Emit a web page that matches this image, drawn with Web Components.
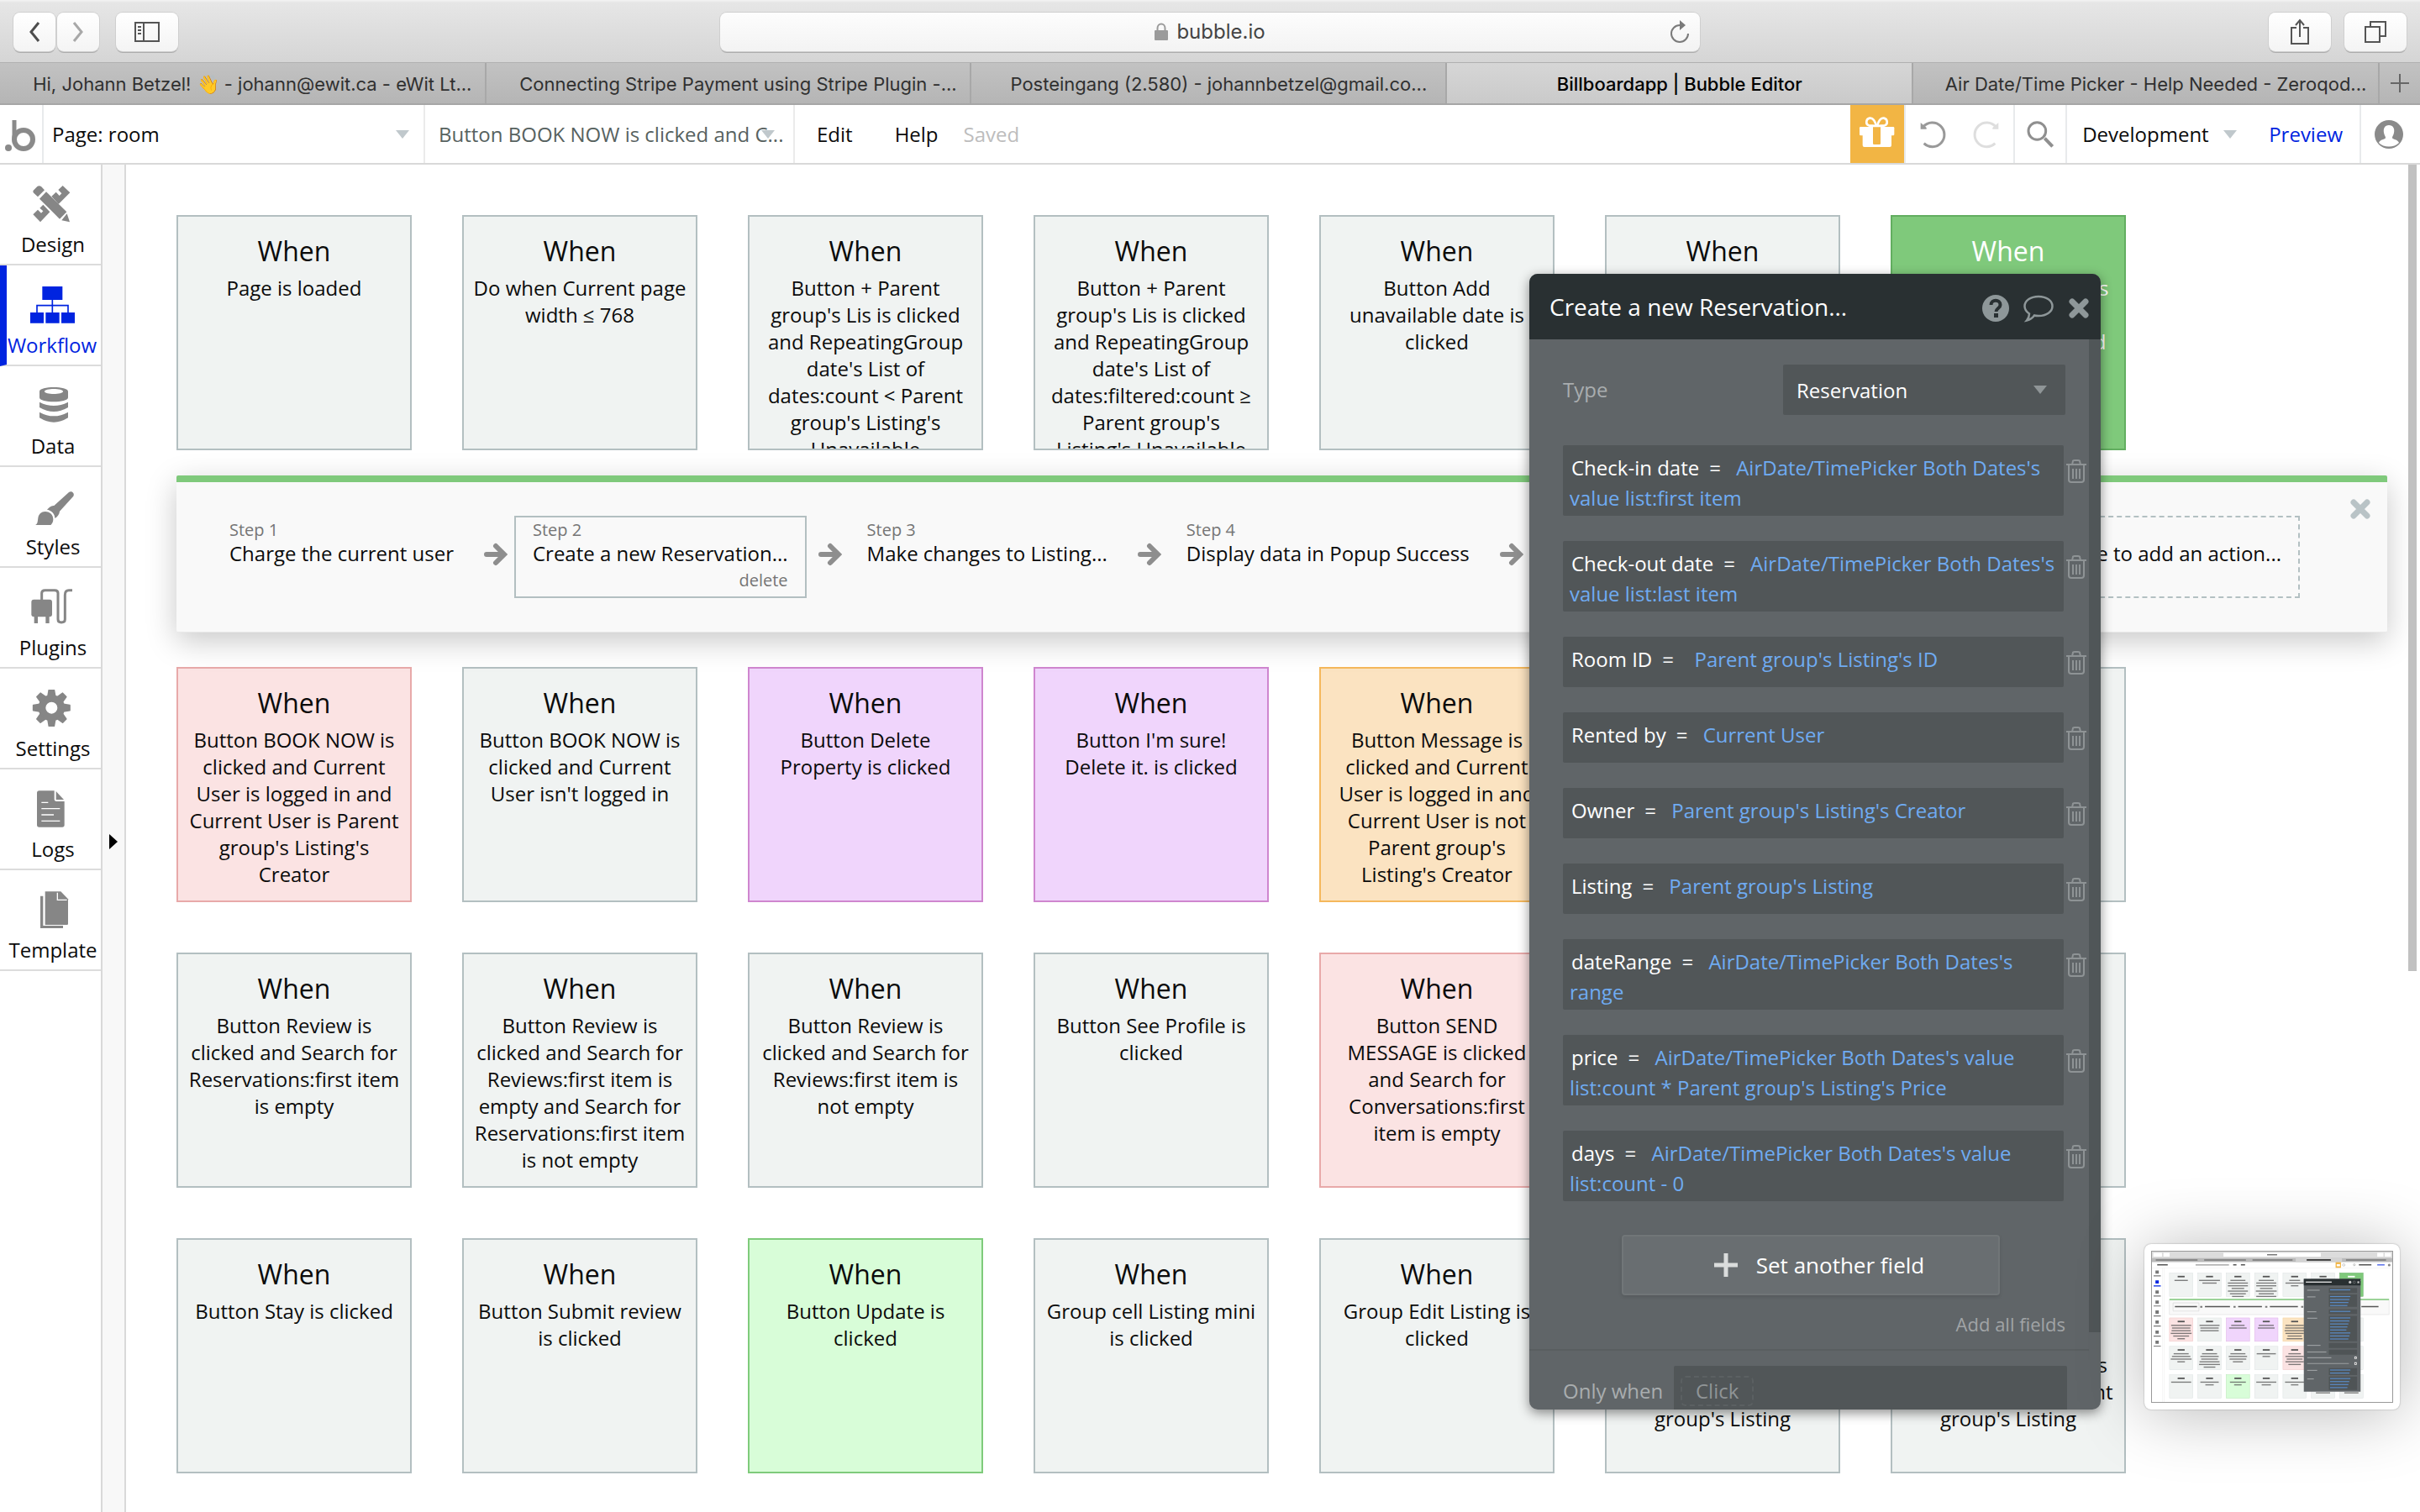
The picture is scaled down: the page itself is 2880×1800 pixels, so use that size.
<!DOCTYPE html>
<html lang="en">
<head>
<meta charset="utf-8">
<title>Billboardapp | Bubble Editor</title>
<style>
  html, body { margin: 0; height: 100%; }
  body { font-family: "Open Sans", "Noto Sans", sans-serif; font-size: 24px; line-height: 32px; color: #0b0b0b; background: #fff; overflow: hidden; }
</style>
</head>
<body>
<app-shell>
  <browser-bar slot="browser" url="bubble.io">
    <browser-tab style="flex-grow:579">Hi, Johann Betzel! 👋 - johann@ewit.ca - eWit Lt...</browser-tab>
    <browser-tab style="flex-grow:578">Connecting Stripe Payment using Stripe Plugin -...</browser-tab>
    <browser-tab style="flex-grow:566">Posteingang (2.580) - johannbetzel@gmail.co...</browser-tab>
    <browser-tab style="flex-grow:554" active>Billboardapp | Bubble Editor</browser-tab>
    <browser-tab style="flex-grow:554">Air Date/Time Picker - Help Needed - Zeroqod...</browser-tab>
  </browser-bar>
  <editor-header slot="header"></editor-header>
  <side-nav slot="nav">
    <nav-item icon="design">Design</nav-item>
    <nav-item icon="workflow" active>Workflow</nav-item>
    <nav-item icon="data">Data</nav-item>
    <nav-item icon="styles">Styles</nav-item>
    <nav-item icon="plugins">Plugins</nav-item>
    <nav-item icon="settings">Settings</nav-item>
    <nav-item icon="logs">Logs</nav-item>
    <nav-item icon="template">Template</nav-item>
  </side-nav>

  <card-grid>
    <when-card>Page is loaded</when-card>
    <when-card>Do when Current page width ≤ 768</when-card>
    <when-card>Button + Parent group's Lis is clicked and RepeatingGroup date's List of dates:count &lt; Parent group's Listing's Unavailable</when-card>
    <when-card>Button + Parent group's Lis is clicked and RepeatingGroup date's List of dates:filtered:count ≥ Parent group's Listing's Unavailable</when-card>
    <when-card>Button Add unavailable date is clicked</when-card>
    <when-card></when-card>
    <when-card tone="selected">Button BOOK NOW is clicked and Current User is logged in and</when-card>
  </card-grid>

  <steps-panel>
    <step-box label="Step 1">Charge the current user</step-box>
    <step-box label="Step 2" active>Create a new Reservation...</step-box>
    <step-box label="Step 3">Make changes to Listing...</step-box>
    <step-box label="Step 4">Display data in Popup Success</step-box>
    <step-box placeholder slot="end">Click here to add an action...</step-box>
  </steps-panel>

  <card-grid>
    <when-card tone="red">Button BOOK NOW is clicked and Current User is logged in and Current User is Parent group's Listing's Creator</when-card>
    <when-card>Button BOOK NOW is clicked and Current User isn't logged in</when-card>
    <when-card tone="purple">Button Delete Property is clicked</when-card>
    <when-card tone="purple">Button I'm sure! Delete it. is clicked</when-card>
    <when-card tone="orange">Button Message is clicked and Current User is logged in and Current User is not Parent group's Listing's Creator</when-card>
    <when-card></when-card>
    <when-card></when-card>

    <when-card>Button Review is clicked and Search for Reservations:first item is empty</when-card>
    <when-card>Button Review is clicked and Search for Reviews:first item is empty and Search for Reservations:first item is not empty</when-card>
    <when-card>Button Review is clicked and Search for Reviews:first item is not empty</when-card>
    <when-card>Button See Profile is clicked</when-card>
    <when-card tone="red">Button SEND MESSAGE is clicked and Search for Conversations:first item is empty</when-card>
    <when-card></when-card>
    <when-card></when-card>

    <when-card>Button Stay is clicked</when-card>
    <when-card>Button Submit review is clicked</when-card>
    <when-card tone="green">Button Update is clicked</when-card>
    <when-card>Group cell Listing mini is clicked</when-card>
    <when-card>Group Edit Listing is clicked</when-card>
    <when-card>Button Next<br>is clicked<br>when Current User is<br>Current User is Parent group's Listing</when-card>
    <when-card>Button Save<br>is clicked<br>when Current User is<br>Current User is Parent group's Listing</when-card>
  </card-grid>

  <property-dialog slot="dialog" heading="Create a new Reservation...">
    <field-row name="Check-in date">AirDate/TimePicker Both Dates's value list:first item</field-row>
    <field-row name="Check-out date">AirDate/TimePicker Both Dates's value list:last item</field-row>
    <field-row name="Room ID">&nbsp;Parent group's Listing's ID</field-row>
    <field-row name="Rented by">Current User</field-row>
    <field-row name="Owner">Parent group's Listing's Creator</field-row>
    <field-row name="Listing">Parent group's Listing</field-row>
    <field-row name="dateRange">AirDate/TimePicker Both Dates's range</field-row>
    <field-row name="price">AirDate/TimePicker Both Dates's value list:count * Parent group's Listing's Price</field-row>
    <field-row name="days">AirDate/TimePicker Both Dates's value list:count - 0</field-row>
  </property-dialog>
  <screen-thumbnail slot="thumbnail"></screen-thumbnail>
</app-shell>

<script>
const gearTeeth = [0, 45, 90, 135, 180, 225, 270, 315]
  .map(a => `<path d="M171 1886l4-23h18l4 23z" transform="rotate(${a} 184 1928)"/>`).join('');

/* name: [viewBox, width, height, markup] */
const ICONS = {
  design: ['99 63 180 132', 60, 44, `<path d="M119 80l14-14q7-5 14 0l12 13-24 24-13-12q-6-5-3-11z"/><path d="M141 110l24-25 73 72-25 25z"/><path d="M220 187l19-24 10 30z"/><path d="M184 101l16-15 12 13 8-8-12-13 16-15 26 25-41 41z"/><path d="M118 166l17-17 12 12 7-7-12-11 12-12 24 26-34 36z"/>`],
  workflow: ['99 423 180 132', 60, 44, `<path d="M154 423h72v48h-72zM111 516h48v38h-48zM166 516h49v38h-49zM222 516h48v38h-48z"/><path d="M190 470v46M135 516v-25h111v25" fill="none" stroke="currentColor" stroke-width="5"/>`],
  data: ['99 783 180 132', 60, 44, `<path fill-rule="evenodd" d="M141 798c0-20 102-20 102 0v22c0 20-102 20-102 0zM159 798c0 12 66 12 66 0s-66-12-66 0z"/><path d="M141 836q51 26 102 0v19q-51 30-102 0z"/><path d="M141 872q51 28 102 0v20q-51 32-102 0z"/>`],
  styles: ['99 1143 180 132', 60, 44, `<path d="M246 1158c9-7 22 3 16 14l-49 54c-1 12-9 20-17 25 0-15-10-27-28-31 8-8 14-15 25-14z"/><path d="M161 1227c19 0 29 13 29 28 0 17-14 29-35 29-12 0-22-3-28-10 8-4 7-12 9-24 2-14 12-23 25-23z"/>`],
  plugins: ['99 1503 180 132', 60, 44, `<rect x="112" y="1541" width="74" height="62" rx="9"/><path d="M122 1600h13v26h-13zM163 1600h13v26h-13z"/><path d="M149 1543v-25q0-10 12-10h34q12 0 12 10v94q0 11 12 11 13 0 13-11v-87q0-17 14-17h12" fill="none" stroke="currentColor" stroke-width="9"/>`],
  settings: ['99 1863 180 132', 60, 44, `<circle cx="184" cy="1928" r="34" fill="none" stroke="currentColor" stroke-width="26"/><g stroke="currentColor" stroke-width="5" stroke-linejoin="round">${gearTeeth}</g>`],
  logs: ['99 2223 180 132', 60, 44, `<path d="M140 2224h54v30q0 8 8 8h28v84q0 8-8 8h-82q-8 0-8-8v-114q0-8 8-8z"/><path d="M200 2226l28 30h-28z"/><path d="M148 2266h24M148 2288h66M148 2310h44M148 2332h66" stroke="#fff" stroke-width="4"/>`],
  template: ['99 2583 180 132', 60, 44, `<path d="M161 2584h56l26 27v88q0 4-4 4h-78z"/><path d="M205 2588v26h34" fill="none" stroke="#fff" stroke-width="4"/><path d="M144 2600h10v106h71v9h-81z"/>`],
  back: ['0 0 14 24', 14, 24, `<path d="M12 1L3 12l9 11" fill="none" stroke="#4d4d4d" stroke-width="3"/>`],
  forward: ['0 0 14 24', 14, 24, `<path d="M2 1l9 11-9 11" fill="none" stroke="#a8a8a8" stroke-width="3"/>`],
  sidebar: ['0 0 30 24', 30, 24, `<path d="M1 1h28v22H1zM11 1v22M4 6h4M4 10h4M4 14h4" fill="none" stroke="#555" stroke-width="2"/>`],
  lock: ['0 0 16 22', 16, 22, `<rect y="9" width="16" height="12" rx="1" fill="#9b9b9b"/><path d="M3.500 10V6.500a4.500 5 0 0 1 9 0V10" fill="none" stroke="#9b9b9b" stroke-width="2"/>`],
  reload: ['0 0 24 28', 24, 28, `<path d="M12 6a10 10 0 1 0 10 10" fill="none" stroke="#7a7a7a" stroke-width="2"/><path d="M12 0l7 6-7 6z" fill="#7a7a7a"/>`],
  share: ['0 0 24 32', 24, 32, `<path d="M8 11H2v19h20V11h-6M12 22V3M7 8l5-6 5 6" fill="none" stroke="#555" stroke-width="2"/>`],
  tabs: ['0 0 26 26', 26, 26, `<path d="M1 7h17v18H1zM7 7V1h18v17h-7" fill="none" stroke="#555" stroke-width="2"/>`],
  plus: ['0 0 24 24', 24, 24, `<path d="M12 1v22M1 12h22" stroke="#666" stroke-width="2"/>`],
  logo: ['0 0 40 44', 40, 44, `<circle cx="5" cy="38" r="4"/><path d="M12 5v23" stroke="currentColor" stroke-width="5"/><circle cx="23" cy="28" r="11" fill="none" stroke="currentColor" stroke-width="6"/>`],
  gift: ['33 378 192 204', 64, 68, `<g fill="#fff"><rect x="66" y="456" width="124" height="31" rx="4"/><path d="M77 486h103v36q0 6-6 6H83q-6 0-6-6z"/></g><g fill="none" stroke="#fff" stroke-width="8"><path d="M127 455c-6-22-16-32-25-30-14 3-15 22-3 26 9 2 19 0 28 4z"/><path d="M128 455c6-22 16-32 25-30 14 3 15 22 3 26-9 2-19 0-28 4z"/></g><path d="M114 457h27v58q0 4-4 4h-19q-4 0-4-4z" fill="#f2b544"/>`],
  undo: ['277 426 96 108', 32, 36, `<path d="M292 452a43 43 0 1 1 2 60" fill="none" stroke="#999" stroke-width="9"/><path d="M282 438l21 18v5h-21z" fill="#999"/>`],
  redo: ['473 426 96 108', 32, 36, `<path d="M554 452a43 43 0 1 0-2 60" fill="none" stroke="#dedede" stroke-width="9"/><path d="M564 438l-21 18v5h21z" fill="#dedede"/>`],
  search: ['664 435 102 102', 34, 34, `<g fill="none" stroke="#8f8f8f"><circle cx="704" cy="474" r="31" stroke-width="9"/><path d="M731 500l28 29" stroke-width="12"/></g>`],
  user: ['0 0 34 34', 34, 34, `<circle cx="17" cy="17" r="17" fill="#8a8a8a"/><path d="M17 6c5 0 7 4 6 9-.5 3-2 4-2 6s7 2 8 6c-6 6-18 6-24 0 1-4 8-4 8-6s-1.500-3-2-6c-1-5 1-9 6-9z" fill="#fff"/>`],
  caret: ['0 0 16 10', 16, 10, `<path d="M0 0h16L8 10z"/>`],
  arrow: ['0 0 28 28', 28, 28, `<path d="M3 14h19M14 4l10 10-10 10" fill="none" stroke="#8e8e8e" stroke-width="6" stroke-linecap="round"/>`],
  close: ['0 0 26 26', 26, 26, `<path d="M5 5l16 16M21 5L5 21" fill="none" stroke="currentColor" stroke-width="7" stroke-linecap="round"/>`],
  help: ['0 0 32 32', 32, 32, `<circle cx="16" cy="16" r="16"/><path d="M10.500 12c0-7 11-7 11 0 0 4-5 4-5 8" fill="none" stroke="#293032" stroke-width="4"/><path d="M14 22h5v5h-5z" fill="#293032"/>`],
  comment: ['0 0 38 34', 38, 34, `<path d="M19 3c9.500 0 16.500 5 16.500 11.500S28.500 26 19 26c-2 0-3.500 0-5-.5-2 3-5 5-9 6 2-2.500 3-5 3-8C4.500 21 2.500 18 2.500 14.500 2.500 8 9.500 3 19 3z" fill="none" stroke="currentColor" stroke-width="2.500"/>`],
  trash: ['0 0 24 30', 24, 30, `<path d="M0 7h24M3 7v18q0 3 3 3h12q3 0 3-3V7M7 7l1-4q0-1 2-1h4q2 0 2 1l1 4M8 12v12M12 12v12M16 12v12" fill="none" stroke="#8e9395" stroke-width="2"/>`],
  bigplus: ['0 0 28 28', 28, 28, `<path d="M14 0v28M0 14h28" stroke="#dadcdc" stroke-width="5"/>`]
};

function define(name, html, setup) {
  const template = document.createElement('template');
  template.innerHTML = html;
  customElements.define(name, class extends HTMLElement {
    connectedCallback() {
      if (this.shadowRoot) return;
      const root = this.attachShadow({ mode: 'open' });
      root.append(template.content.cloneNode(true));
      if (setup) setup(this, root);
    }
  });
}

const RESET = `*{box-sizing:border-box} button,select,input{font:inherit;color:inherit;margin:0;padding:0;border:0;background:none;border-radius:0;appearance:none;outline:0;cursor:pointer}`;

define('ui-icon', `<style>:host{display:inline-flex;flex:none} svg{display:block;fill:currentColor}</style>`, (el, root) => {
  const [box, w, h, body] = ICONS[el.getAttribute('name')];
  root.innerHTML += `<svg viewBox="${box}" width="${w}" height="${h}" aria-hidden="true">${body}</svg>`;
});

define('app-shell', `<style>
  :host{display:flex;flex-direction:column;height:100vh;position:relative}
  .work{flex:1;display:flex;min-height:0}
  main{flex:1;min-width:0;position:relative;overflow:hidden;padding:60px 39px 0 60px;display:flex;flex-direction:column}
  ::slotted(card-grid){flex:none}
  .bar{position:absolute;right:4px;top:0;width:10px;height:960px;background:#c1c1c1}
</style>
<slot name="browser"></slot><slot name="header"></slot>
<div class="work"><slot name="nav"></slot><main><slot></slot><div class="bar"></div></main></div>
<slot name="dialog"></slot><slot name="thumbnail"></slot>`);

define('browser-bar', `<style>${RESET}
  :host{display:block;font-family:Inter,"Liberation Sans",sans-serif;color:#303030}
  .tools{height:75px;display:grid;grid-template-columns:1fr 1166px 1fr;align-items:center;padding:2px 16px 0;background:linear-gradient(#f4f4f4 0,#e6e6e6 3px,#d5d5d5);border-bottom:1px solid #b0b0b0}
  .group{display:flex;gap:2px}
  .group.end{justify-content:flex-end;gap:16px}
  button{height:46px;width:50px;border-radius:8px;background:linear-gradient(#fff,#f4f4f4);box-shadow:0 0 0 1px #cfcfcf,0 2px 0 #acacac;display:flex;align-items:center;justify-content:center}
  button.wide{width:74px}
  .group:first-child .wide{margin-left:18px}
  .url{height:46px;border-radius:8px;background:linear-gradient(#fdfdfd,#f3f3f3);box-shadow:0 0 0 1px #cfcfcf,0 2px 0 #acacac;display:grid;grid-template-columns:36px 1fr 36px;align-items:center}
  label{display:flex;justify-content:center;align-items:center;gap:10px}
  input{field-sizing:content;cursor:text;font-size:24px;height:32px;color:#444}
  .url button{background:none;box-shadow:none;width:24px;height:32px}
  .tabs{height:50px;display:flex;background:linear-gradient(#c2c2c2,#b5b5b5);border-bottom:2px solid #a6a6a6}
  .tabs button{width:48px;height:48px;background:none;box-shadow:none;border-radius:0}
</style>
<div class="tools">
  <div class="group"><button aria-label="Back"><ui-icon name="back"></ui-icon></button><button aria-label="Forward"><ui-icon name="forward"></ui-icon></button><button class="wide" aria-label="Show sidebar"><ui-icon name="sidebar"></ui-icon></button></div>
  <div class="url"><span></span><label><ui-icon name="lock"></ui-icon><input aria-label="Address"></label><button aria-label="Reload"><ui-icon name="reload"></ui-icon></button></div>
  <div class="group end"><button class="wide" aria-label="Share"><ui-icon name="share"></ui-icon></button><button class="wide" aria-label="Tab overview"><ui-icon name="tabs"></ui-icon></button></div>
</div>
<div class="tabs"><slot></slot><button aria-label="New tab"><ui-icon name="plus"></ui-icon></button></div>`,
(el, root) => root.querySelector('input').value = el.getAttribute('url'));

define('browser-tab', `<style>
  :host{flex:1 1 0;min-width:0;display:flex;align-items:center;justify-content:center;padding:2px 0 0 24px;border-right:2px solid #a8a8a8;font-size:22px;white-space:nowrap;box-sizing:border-box}
  :host([active]){background:linear-gradient(#d6d6d6,#cacaca);color:#000;font-weight:500;padding:2px 12px 0}
</style><slot></slot>`);

define('editor-header', `<style>${RESET}
  :host{display:flex;height:71px;box-sizing:border-box;border-bottom:2px solid #d9d9d9;align-items:stretch;background:#fff;flex:none}
  .cell{display:flex;align-items:center;justify-content:center;border-right:2px solid #e8eaec}
  .logo{width:52px;color:#8a8a8a}
  .pick{display:grid;align-items:center;border-right:2px solid #ebebeb}
  .pick>*{grid-area:1/1}
  .pick ui-icon{justify-self:end;color:#c0c8cc;pointer-events:none;margin-right:17px}
  select{width:100%;height:100%;padding-left:10px}
  .page{width:454px}
  .flow{width:440px;color:#57625f} .flow select{padding-left:16px} .flow ui-icon{margin-right:22px}
  .menu{display:flex;align-items:center;flex:1;padding-left:26px}
  .menu button+button{margin-left:50px}
  .saved{color:#bdbdbd;margin-left:30px}
  .gift{width:64px;background:#f2b544}
  .history{display:flex;border-right:2px solid #e8eaec;border-left:2px solid #e8eaec}
  .history button{width:64px}
  .history ui-icon,.find ui-icon{vertical-align:middle}
  .find{width:62px}
  .dev{width:202px;border:0} .dev select{padding-left:18px} .dev ui-icon{margin-right:0}
  a{color:#0024e0;text-decoration:none;padding:0 20px 0 38px}
  .user{width:70px;border:0;padding-right:4px}
</style>
<div class="cell logo"><ui-icon name="logo"></ui-icon></div>
<div class="pick page"><select aria-label="Page"><option>Page: room</option></select><ui-icon name="caret"></ui-icon></div>
<div class="pick flow"><select aria-label="Workflow"><option>Button BOOK NOW is clicked and C...</option></select><ui-icon name="caret"></ui-icon></div>
<div class="menu"><button>Edit</button><button>Help</button><span class="saved">Saved</span></div>
<button class="gift" aria-label="Gift"><ui-icon name="gift"></ui-icon></button>
<div class="history"><button aria-label="Undo"><ui-icon name="undo"></ui-icon></button><button aria-label="Redo"><ui-icon name="redo"></ui-icon></button></div>
<button class="cell find" aria-label="Search"><ui-icon name="search"></ui-icon></button>
<div class="pick dev"><select aria-label="Version"><option>Development</option></select><ui-icon name="caret"></ui-icon></div>
<div class="cell"><a href="#preview">Preview</a></div>
<button class="cell user" aria-label="Account"><ui-icon name="user"></ui-icon></button>`);

define('side-nav', `<style>${RESET}
  :host{display:flex;flex:none}
  nav{width:122px;border-right:2px solid #d9d9d9}
  .strip{width:28px;background:#f8f8f8;border-right:2px solid #d9d9d9}
  button{display:block;margin:797px 0 0 8px;width:0;height:0;border:solid transparent;border-width:9px 0 9px 10px;border-left-color:#000}
</style><nav><slot></slot></nav><div class="strip"><button aria-label="Expand"></button></div>`);

define('nav-item', `<style>${RESET}
  :host{display:block}
  a{display:flex;flex-direction:column;align-items:center;height:120px;padding:25px 0 0 6px;gap:10px;border-bottom:2px solid #dcdcdc;color:#0b0b0b;text-decoration:none}
  .icon{height:44px;color:#868686}
  :host([active]) a{padding:25px 4px 0 0;border-left:8px solid #0024e0;color:#0024e0}
  :host([active]) .icon{color:#0024e0}
</style><a href="#"><span class="icon"></span><slot></slot></a>`,
(el, root) => {
  root.querySelector('.icon').innerHTML = `<ui-icon name="${el.getAttribute('icon')}"></ui-icon>`;
});

define('card-grid', `<style>:host{display:flex;flex-wrap:wrap;gap:60px}</style><slot></slot>`);

define('when-card', `<style>
  :host{display:block;box-sizing:border-box;width:280px;height:280px;border:2px solid #b3bfc1;background:#f0f3f2;padding:21px 10px 0;text-align:center;overflow:hidden}
  :host([tone=red]){background:#fbe3e3;border-color:#e8a9a9}
  :host([tone=purple]){background:#f0d5fc;border-color:#cf86cf}
  :host([tone=orange]){background:#fbe3c1;border-color:#f5b85c}
  :host([tone=green]){background:#d8fdd8;border-color:#7fcb7b}
  :host([tone=selected]){background:#7fc97b;border-color:#62ae60;color:#fff}
  h3{margin:0 0 8px;font-size:32px;line-height:40px;font-weight:400}
</style><h3>When</h3><slot></slot>`);

define('steps-panel', `<style>${RESET}
  :host{display:flex;flex:none;position:relative;margin:30px 0 41px;padding:40px 104px 40px 41px;box-sizing:border-box;background:#f9f9f9;border-top:8px solid #7fc97b;border-bottom:1px solid #e9e9e9;border-radius:2px;box-shadow:0 10px 36px rgba(0,0,0,.22)}
  .end{margin-left:auto}
  button{position:absolute;top:19px;right:19px;width:26px;height:26px;color:#b9c3c6}
</style><slot></slot><div class="end"><slot name="end"></slot></div><button aria-label="Close steps"><ui-icon name="close"></ui-icon></button>`);

define('step-box', `<style>${RESET}
  :host{display:flex;align-items:center;white-space:nowrap}
  .box{height:98px;border:2px solid transparent;padding:3px 20px 0;display:flex;flex-direction:column}
  small{font-size:20px;line-height:24px;color:#757575}
  button{display:none;font-size:20px;line-height:32px;color:#757575;align-self:flex-end}
  .arrow{margin:-6px 8px 0 14px}
  :host([active]) .box{border-color:#b3bfc1}
  :host([active]) button{display:block}
  :host([placeholder]) .box{border:2px dashed #b3c0c2;padding-top:27px}
  :host([placeholder]) :is(small,.arrow){display:none}
</style><div class="box"><small></small><span><slot></slot></span><button>delete</button></div><ui-icon class="arrow" name="arrow"></ui-icon>`,
(el, root) => root.querySelector('small').textContent = el.getAttribute('label') || '');

define('property-dialog', `<style>${RESET}
  :host{position:absolute;left:1820px;top:326px;width:680px;height:1352px;display:flex;flex-direction:column;border-radius:10px;overflow:hidden;background:#606568;color:#fff;box-shadow:0 4px 14px rgba(0,0,0,.45)}
  header{flex:none;display:flex;align-items:center;height:78px;padding:0 13px 0 24px;background:#293032;color:#8e9799}
  h2{flex:1;margin:0;font-size:28px;line-height:36px;font-weight:400;color:#fff}
  header button{height:34px;display:flex;align-items:center;margin-top:4px}
  header button+button{margin-left:16px}
  .body{flex:1;min-height:0;display:grid;grid-template-columns:1fr 14px}
  .content{overflow:hidden;padding:30px 28px 0 40px}
  .thumb{height:1182px;background:#505658}
  .row{display:flex;align-items:center;justify-content:space-between;color:#a9adaf}
  .pick{display:grid;align-items:center;width:336px;height:60px;background:#515658;border-radius:2px}
  .pick>*{grid-area:1/1}
  .pick ui-icon{justify-self:end;margin-right:22px;color:#8f9597;pointer-events:none}
  .pick select{height:60px;padding:2px 0 0 16px;color:#fff}
  .fields{display:flex;flex-direction:column;gap:30px;margin:36px -28px 0 0}
  .add{display:flex;justify-content:center;padding-right:8px;margin-top:40px}
  .add button{display:flex;align-items:center;justify-content:center;gap:22px;width:450px;height:72px;padding-left:20px;border:2px solid #717678;border-radius:4px;background:#696e71;font-size:26px;box-shadow:0 2px 4px rgba(0,0,0,.12)}
  .all{display:block;margin:18px 0 14px auto;font-size:22px;line-height:32px;color:#a0a4a6}
  hr{margin:0 -28px 18px -40px;border:0;border-top:2px solid #595e60}
  .only label{width:132px}
  .expr{flex:1;height:60px;background:#515658;display:flex;align-items:center;padding-left:8px;margin-right:-2px;border-radius:2px}
  .expr button{height:36px;padding:0 16px;border:2px dashed #5b6062;border-radius:6px;color:#8f9496;line-height:32px}
</style>
<header><h2></h2><button aria-label="Help"><ui-icon name="help"></ui-icon></button><button aria-label="Comment"><ui-icon name="comment"></ui-icon></button><button aria-label="Close"><ui-icon name="close"></ui-icon></button></header>
<div class="body"><div class="content">
  <div class="row"><label for="type">Type</label><div class="pick"><select id="type"><option>Reservation</option></select><ui-icon name="caret"></ui-icon></div></div>
  <div class="fields"><slot></slot></div>
  <div class="add"><button><ui-icon name="bigplus"></ui-icon>Set another field</button></div>
  <button class="all">Add all fields</button>
  <hr>
  <div class="row only"><label>Only when</label><div class="expr"><button>Click</button></div></div>
</div><div class="thumb"></div></div>`,
(el, root) => root.querySelector('h2').textContent = el.getAttribute('heading'));

define('field-row', `<style>${RESET}
  :host{display:flex;align-items:flex-start}
  .box{flex:1;min-height:60px;padding:9px 4px 3px 8px;background:#515658;border-radius:2px;line-height:36px}
  .name{margin:0 12px 0 2px}
  .eq{margin-right:12px}
  .value{color:#6fabf2}
  button{width:30px;margin-top:16px}
  ui-icon{display:flex;justify-content:center}
</style><div class="box"><span class="name"></span><span class="eq">=</span> <span class="value"><slot></slot></span></div><button aria-label="Delete field"><ui-icon name="trash"></ui-icon></button>`,
(el, root) => root.querySelector('.name').textContent = el.getAttribute('name'));

function previewScene() {
  const tone = { g: ['#f0f3f2', '#dde2e2'], r: ['#fbe3e3', '#efc4c4'], p: ['#f0d5fc', '#dfb0e4'], o: ['#fbe3c1', '#f3cf98'], n: ['#d8fdd8', '#b5e6b3'], s: ['#7fc97b', '#62ae60'] };
  const rows = [
    [256, 'ggggggs', [[160], [250, 170], [180, 240, 240, 150, 240, 190, 140], [180, 240, 240, 150, 250, 180, 240], [130, 220, 90], [], [230, 210]]],
    [794, 'rgppogg', [[240, 220, 230, 250, 190, 90], [240, 220, 220], [160, 210], [180, 200], [220, 230, 240, 220, 170, 190], [], []]],
    [1134, 'ggggrgg', [[180, 220, 250, 90], [180, 220, 200, 240, 250, 140], [180, 220, 200, 120], [230, 90], [150, 220, 190, 220, 150], [], []]],
    [1474, 'ggngggg', [[240], [220, 100], [190, 90], [240, 110], [230, 90], [0, 0, 0, 0, 170], [0, 0, 0, 0, 170]]]
  ];
  let s = `<path fill="#fff" d="M0 0h2880v1800H0z"/><path fill="#dcdcdc" d="M0 0h2880v75H0z"/><path fill="#fff" d="M16 15h104v46H16zM138 15h74v46h-74zM857 15h1166v46H857zM2700 15h74v46h-74zM2790 15h74v46h-74z"/><path fill="#bababa" d="M0 75h2880v50H0z"/><path fill="#d3d3d3" d="M1723 75h554v50h-554z"/><path fill="#777" d="M46 92h500v16H46zM626 92h500v16H626zM1205 92h480v16h-480zM2325 92h480v16h-480zM1380 30h120v16h-120z"/><path fill="#222" d="M1854 92h290v16h-290z"/>`;
  s += `<path fill="#555" d="M63 152h126v14H63zM973 152h40v14h-40zM1066 152h50v14h-50zM2480 152h150v14h-150z"/><path fill="#999" d="M523 154h400v12H523z"/><path fill="#f2b544" d="M2201 127h64v68h-64z"/><path fill="#fff" d="M2214 150h40v26h-40z"/><path fill="#4a63e8" d="M2700 152h88v14h-88z"/><circle cx="2299" cy="160" r="14" fill="none" stroke="#999" stroke-width="5"/><circle cx="2425" cy="158" r="11" fill="none" stroke="#888" stroke-width="5"/><circle cx="2843" cy="161" r="16" fill="#888"/><path fill="#e0e0e0" d="M0 194h2880v3H0zM121 196h3v1604h-3zM148 196h3v1604h-3z"/>`;
  for (let i = 0; i < 8; i++) {
    const c = i === 1 ? '#0024e0' : '#777';
    s += `<path fill="${c}" d="M42 ${225 + i * 120}h40v38H42zM20 ${285 + i * 120}h86v12H20z"/>`;
  }
  for (const [y, tones, texts] of rows) [...tones].forEach((t, i) => {
    const x = 210 + i * 340, ink = t === 's' ? '#fff' : '#555';
    s += `<rect x="${x}" y="${y}" width="280" height="280" fill="${tone[t][0]}" stroke="${tone[t][1]}" stroke-width="5"/><path fill="${ink}" d="M${x + 98} ${y + 34}h84v18h-84z"/>`;
    texts[i].forEach((w, n) => w && (s += `<path fill="${ink}" opacity=".75" d="M${x + 140 - w / 2} ${y + 82 + n * 32}h${w}v14h-${w}z"/>`));
  });
  s += `<rect x="210" y="574" width="2631" height="180" fill="#f9f9f9" stroke="#ddd" stroke-width="6"/><path fill="#7fc97b" d="M210 566h2631v14H210z"/><path fill="none" stroke="#ccc" stroke-width="5" d="M253 614h310v98H253z"/><path fill="#555" d="M275 652h265v14H275zM635 652h300v14H635zM1033 652h285v14h-285zM1413 652h336v14h-336zM2510 652h205v14h-205z"/><path fill="#777" d="M578 650h26v20h-26zM977 650h26v20h-26zM1357 650h26v20h-26zM1788 650h26v20h-26z"/>`;
  s += `<path fill="#606568" d="M1820 326h680v1352h-680z"/><path fill="#293032" d="M1820 326h680v78h-680z"/><path fill="#ddd" d="M1844 358h310v14h-310z"/><circle cx="2374" cy="366" r="16" fill="#ccc"/><circle cx="2424" cy="366" r="14" fill="none" stroke="#aaa" stroke-width="4"/><path fill="#ccc" d="M2462 356h22v22h-22z"/>`;
  const form = [[434, 60, 150], [514, 146, 100], [692, 54, 110], [770, 304, 120], [1094, 60, 160], [1174, 60, 230], [1394, 84, 120], [1496, 160, 80]];
  for (const [y, h, w] of form) {
    s += `<path fill="#4f5456" d="M2120 ${y}h338v${h}h-338z"/><path fill="#9a9ea0" d="M1860 ${y + 22}h${w}v12h-${w}z"/>`;
    if (y < 1090 || y > 1300) for (let k = 18; k < h - 14; k += 36) s += `<path fill="#5a8cc8" d="M2134 ${y + k}h${250 - (k * 7) % 60}v12h-${250 - (k * 7) % 60}z"/>`;
  }
  s += `<path fill="#9a9ea0" d="M1860 1264h290v12h-290zM1860 1334h500v12h-500z"/><path fill="#fff" d="M2426 1256h28v28h-28zM2426 1326h28v28h-28z"/><path fill="#333" d="M2434 1266h12v12h-12zM2434 1336h12v12h-12z"/>`;
  return s;
}
define('screen-thumbnail', `<style>
  :host{position:absolute;right:24px;bottom:122px;padding:8px;background:#fff;border-radius:8px;box-shadow:0 0 2px rgba(0,0,0,.35),0 4px 80px rgba(0,0,0,.28)}
  svg{display:block;width:286px;height:179px;border:1px solid #999}
</style>`, (el, root) => {
  root.innerHTML += `<svg viewBox="0 0 2880 1800" preserveAspectRatio="none" role="img" aria-label="Previous screen">${previewScene()}</svg>`;
});
</script>
</body>
</html>
